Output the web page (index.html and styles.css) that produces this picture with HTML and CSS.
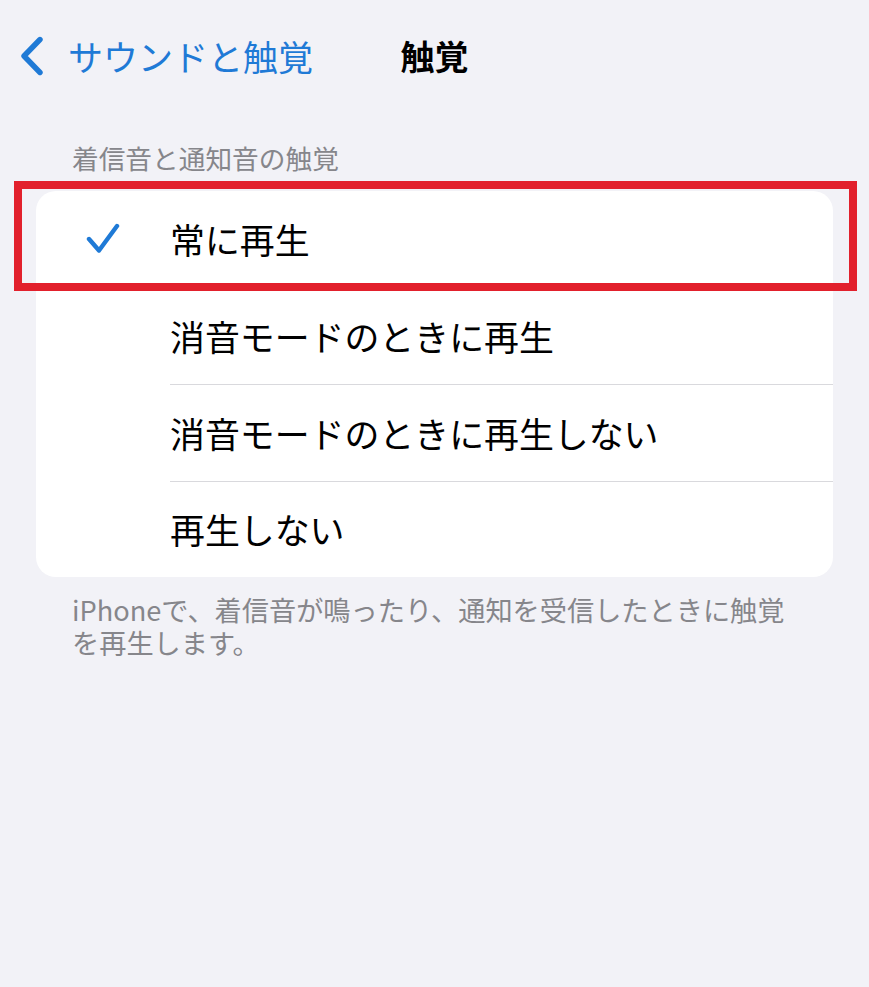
FILE: index.html
```html
<!DOCTYPE html>
<html lang="ja">
<head>
<meta charset="utf-8">
<title>触覚</title>
<link rel="stylesheet" href="styles.css">
</head>
<body>
<div class="screen">
  <header class="nav">
    <div class="nav-back">
      <svg class="chevron" width="28" height="40" viewBox="0 0 28 40" aria-hidden="true">
        <path d="M22 3.5 L6 20 L22 36.5" fill="none" stroke="#1f7ad6" stroke-width="5.4" stroke-linecap="round" stroke-linejoin="round"/>
      </svg>
      <span class="nav-back-label">サウンドと触覚</span>
    </div>
    <h1 class="nav-title">触覚</h1>
    <div></div>
  </header>

  <div class="section-header">着信音と通知音の触覚</div>

  <div class="group">
    <ul class="list">
      <li class="row">
        <span class="row-check">
          <svg width="34" height="32" viewBox="0 0 34 32" aria-hidden="true">
            <path d="M3 16 L13 27.5 L31 3" fill="none" stroke="#1f7ad6" stroke-width="4.4" stroke-linecap="round" stroke-linejoin="round"/>
          </svg>
        </span>
        <span class="row-label">常に再生</span>
      </li>
      <li class="row">
        <span class="row-check"></span>
        <span class="row-label">消音モードのときに再生</span>
      </li>
      <li class="row">
        <span class="row-check"></span>
        <span class="row-label">消音モードのときに再生しない</span>
      </li>
      <li class="row">
        <span class="row-check"></span>
        <span class="row-label">再生しない</span>
      </li>
    </ul>
    <div class="highlight"></div>
  </div>

  <p class="footer">iPhoneで、着信音が鳴ったり、通知を受信したときに触覚を再生します。</p>
</div>
</body>
</html>
```

FILE: styles.css
```css
* {
  box-sizing: border-box;
}

html, body {
  margin: 0;
  padding: 0;
  background: #f2f2f7;
}

body {
  font-family: "Noto Sans CJK JP", "Noto Sans", "Liberation Sans", sans-serif;
  color: #000;
  width: 869px;
  height: 987px;
  overflow: hidden;
}

.screen {
  display: flex;
  flex-direction: column;
}

.nav {
  height: 112px;
  display: grid;
  grid-template-columns: 1fr auto 1fr;
  align-items: center;
}

.nav-back {
  display: flex;
  align-items: center;
  padding-left: 18px;
  gap: 22px;
}

.chevron {
  display: block;
}

.nav-back-label {
  color: #1f7ad6;
  font-size: 35px;
  line-height: 40px;
  white-space: nowrap;
}

.nav-title {
  margin: 0;
  font-size: 34px;
  font-weight: 700;
  line-height: 40px;
}

.section-header {
  margin-top: 29px;
  padding-left: 72px;
  font-size: 26.7px;
  line-height: 34px;
  color: #86868b;
}

.group {
  position: relative;
  margin: 16px 36px 0;
}

.list {
  list-style: none;
  margin: 0;
  padding: 0;
  background: #fff;
  border-radius: 20px;
  overflow: hidden;
}

.row {
  display: flex;
  height: 96.5px;
}

.row-check {
  width: 134px;
  flex: none;
  display: flex;
  align-items: center;
  padding-left: 50px;
}

.row-check svg {
  display: block;
}

.row-label {
  flex: 1;
  display: flex;
  align-items: center;
  font-size: 34.9px;
  line-height: 40px;
  white-space: nowrap;
}

.row + .row .row-label {
  border-top: 1.5px solid #d9d9dd;
}

.highlight {
  position: absolute;
  left: -22px;
  right: -24px;
  top: -10px;
  height: 110px;
  border: 8px solid #e2202c;
  pointer-events: none;
}

.footer {
  margin: 16px 0 0;
  padding: 0 72px;
  font-size: 27.2px;
  line-height: 33px;
  color: #86868b;
}
```
